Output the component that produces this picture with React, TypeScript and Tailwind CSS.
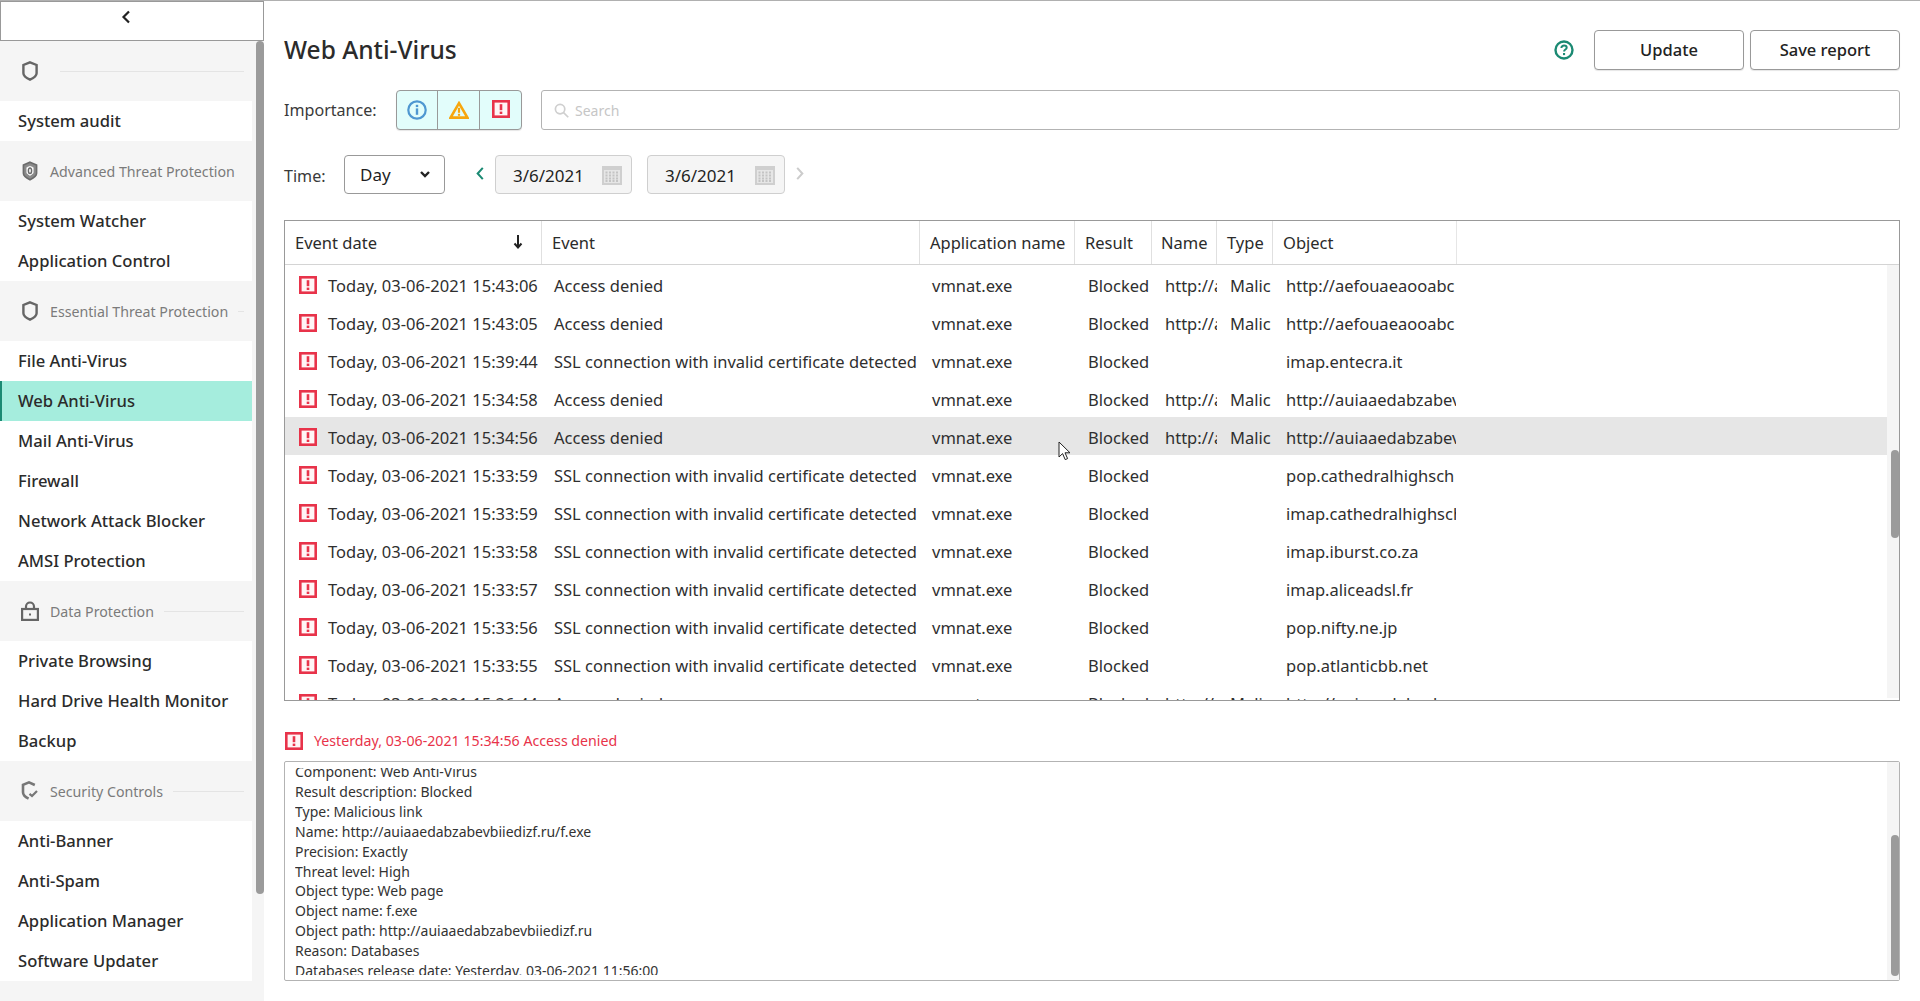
import React from "react";

const Err = ({ className = "" }: { className?: string }) => (
  <svg viewBox="0 0 18 18" className={`w-[18px] h-[18px] shrink-0 ${className}`}>
    <rect x="1.3" y="1.3" width="15.4" height="15.4" fill="#fff5f6" stroke="#e8334a" strokeWidth="2.6" />
    <rect x="7.7" y="4.2" width="2.6" height="6" fill="#e8334a" />
    <rect x="7.7" y="11.6" width="2.6" height="2.4" fill="#e8334a" />
  </svg>
);

const ShieldPlain = () => (
  <svg viewBox="0 0 16 20" className="w-[16px] h-[20px]" fill="none" stroke="#666666" strokeWidth="2.4">
    <path d="M8 1.4 14.6 4v8.2c0 2.6-3.2 4.9-6.6 6.4-3.4-1.5-6.6-3.8-6.6-6.4V4z" />
  </svg>
);
const ShieldAdv = () => (
  <svg viewBox="0 0 16 20" className="w-[16px] h-[20px]" fill="none">
    <path d="M8 1.2 14.6 4v8.2c0 2.6-3.2 4.9-6.6 6.6-3.4-1.7-6.6-4-6.6-6.6V4z" fill="#8a8a8a" stroke="#6b6b6b" strokeWidth="1.6" />
    <path d="M8 5.2 11.2 6.6v4.8c0 1.1-1.4 2-3.2 3-1.8-1-3.2-1.9-3.2-3V6.6z" fill="#ffffff" stroke="#ffffff" strokeWidth=".6" />
    <ellipse cx="8" cy="9.8" rx="1.6" ry="2.8" fill="none" stroke="#6b6b6b" strokeWidth="1.5" />
  </svg>
);
const Lock = () => (
  <svg viewBox="0 0 18 20" className="w-[18px] h-[20px]" fill="none" stroke="#666666" strokeWidth="2.2">
    <path d="M5 8V5.5a4 4 0 0 1 8 0V8" />
    <rect x="1.1" y="8" width="15.8" height="10.9" />
    <rect x="8" y="12.5" width="2" height="2" fill="#666666" stroke="none" />
  </svg>
);
const ShieldCheck = () => (
  <svg viewBox="0 0 18 20" className="w-[18px] h-[20px]" fill="none" stroke="#777777" strokeWidth="2.6">
    <path d="M13.8 4 8 1.4 2 3.9v7.3c0 2.6 2.6 5 5.6 6.5" />
    <path d="M8.5 12.8 11 15l5-5" strokeWidth="2.2" />
  </svg>
);

const Group = ({ icon, label }: { icon: React.ReactNode; label: string }) => (
  <div className="h-[60px] flex items-center pl-[21px] pr-[8px]">
    <span className="w-[18px] flex justify-center shrink-0">{icon}</span>
    {label ? (
      <span className="ml-[11px] pt-px text-[14.2px] text-[#7b7b7b] whitespace-nowrap">{label}</span>
    ) : null}
    <span className={`flex-1 h-px bg-[#e4e4e4] ${label ? "ml-[10px]" : "ml-[21px]"}`} />
  </div>
);

const Item = ({ label, active }: { label: string; active?: boolean }) => (
  <div
    className={`h-[40px] flex items-center pl-[18px] pt-px text-[16.6px] font-medium text-[#2b2b2b] whitespace-nowrap ${
      active ? "bg-[#a5eddd] shadow-[inset_2px_0_0_#1b8a73]" : "bg-white"
    }`}
  >
    {label}
  </div>
);

type Row = { d: string; e: string; n?: string; t?: string; o: string };
const SSL = "SSL connection with invalid certificate detected";
const rows: Row[] = [
  { d: "Today, 03-06-2021 15:43:06", e: "Access denied", n: "http://a", t: "Malicious", o: "http://aefouaeaooabc" },
  { d: "Today, 03-06-2021 15:43:05", e: "Access denied", n: "http://a", t: "Malicious", o: "http://aefouaeaooabc" },
  { d: "Today, 03-06-2021 15:39:44", e: SSL, o: "imap.entecra.it" },
  { d: "Today, 03-06-2021 15:34:58", e: "Access denied", n: "http://a", t: "Malicious", o: "http://auiaaedabzabev" },
  { d: "Today, 03-06-2021 15:34:56", e: "Access denied", n: "http://a", t: "Malicious", o: "http://auiaaedabzabev" },
  { d: "Today, 03-06-2021 15:33:59", e: SSL, o: "pop.cathedralhighsch" },
  { d: "Today, 03-06-2021 15:33:59", e: SSL, o: "imap.cathedralhighsch" },
  { d: "Today, 03-06-2021 15:33:58", e: SSL, o: "imap.iburst.co.za" },
  { d: "Today, 03-06-2021 15:33:57", e: SSL, o: "imap.aliceadsl.fr" },
  { d: "Today, 03-06-2021 15:33:56", e: SSL, o: "pop.nifty.ne.jp" },
  { d: "Today, 03-06-2021 15:33:55", e: SSL, o: "pop.atlanticbb.net" },
  { d: "Today, 03-06-2021 15:26:44", e: "Access denied", n: "http://a", t: "Malicious", o: "http://auiaaedabzabev" },
];

const details = [
  "Component: Web Anti-Virus",
  "Result description: Blocked",
  "Type: Malicious link",
  "Name: http://auiaaedabzabevbiiedizf.ru/f.exe",
  "Precision: Exactly",
  "Threat level: High",
  "Object type: Web page",
  "Object name: f.exe",
  "Object path: http://auiaaedabzabevbiiedizf.ru",
  "Reason: Databases",
  "Databases release date: Yesterday, 03-06-2021 11:56:00",
];

const Head = ({ w, children, last }: { w: string; children?: React.ReactNode; last?: boolean }) => (
  <div className={`${w} shrink-0 pl-[10px] pt-px flex items-center border-r ${last ? "border-[#e6e6e6]" : "border-[#e0e0e0]"} whitespace-nowrap`}>
    {children}
  </div>
);

const Cal = () => (
  <svg viewBox="0 0 20 20" className="w-[20px] h-[20px]">
    <rect x="0" y="1" width="20" height="19" fill="#cfcfcf" />
    <rect x="2" y="5" width="16" height="13" fill="#e6e6e6" />
    {[3.5, 7, 10.5, 14].map((x) =>
      [6.5, 9.5, 12.5, 15].map((y) => <rect key={`${x}-${y}`} x={x} y={y} width="2" height="2" fill="#c4c4c4" />)
    )}
  </svg>
);

const DateBox = ({ w }: { w: string }) => (
  <div className={`${w} h-[39px] rounded-[4px] border border-[#cfcfcf] bg-[#f5f5f5] flex items-center justify-between pl-[17px] pr-[9px] text-[17px] text-[#1f1f1f]`}>
    <span className="pt-[2px]">3/6/2021</span>
    <Cal />
  </div>
);

export default function App() {
  return (
    <div className="w-[1920px] h-[1001px] overflow-hidden bg-white flex flex-col font-['Noto_Sans','Open_Sans',sans-serif] text-[#2b2b2b]">
      <div className="h-px bg-[#b0b0b0] shrink-0" />
      <div className="flex flex-1 min-h-0">
        <aside className="w-[264px] shrink-0 flex flex-col bg-[#f5f5f5]">
          <button className="h-[40px] shrink-0 bg-white border border-[#999999] flex items-start justify-center pt-[8px] pr-[12px]">
            <svg viewBox="0 0 10 14" className="w-[10px] h-[14px]" fill="none" stroke="#222" strokeWidth="2.2">
              <path d="M8 1.5 2.5 7 8 12.5" />
            </svg>
          </button>
          <div className="flex flex-1 min-h-0">
            <div className="w-[252px] shrink-0">
              <Group icon={<ShieldPlain />} label="" />
              <Item label="System audit" />
              <Group icon={<ShieldAdv />} label="Advanced Threat Protection" />
              <Item label="System Watcher" />
              <Item label="Application Control" />
              <Group icon={<ShieldPlain />} label="Essential Threat Protection" />
              <Item label="File Anti-Virus" />
              <Item label="Web Anti-Virus" active />
              <Item label="Mail Anti-Virus" />
              <Item label="Firewall" />
              <Item label="Network Attack Blocker" />
              <Item label="AMSI Protection" />
              <Group icon={<Lock />} label="Data Protection" />
              <Item label="Private Browsing" />
              <Item label="Hard Drive Health Monitor" />
              <Item label="Backup" />
              <Group icon={<ShieldCheck />} label="Security Controls" />
              <Item label="Anti-Banner" />
              <Item label="Anti-Spam" />
              <Item label="Application Manager" />
              <Item label="Software Updater" />
            </div>
            <div className="ml-[4px] w-[8px] h-[853px] rounded-[4px] bg-[#9b9b9b]" />
          </div>
        </aside>

        <main className="relative flex-1 min-w-0 pl-[20px] pr-[20px] flex flex-col">
          <div className="h-[29px] shrink-0" />
          <div className="h-[40px] shrink-0 flex items-center">
            <h1 className="text-[24.5px] font-medium text-[#2b2b2b] leading-none">Web Anti-Virus</h1>
            <svg viewBox="0 0 20 20" className="w-[20px] h-[20px] ml-auto" fill="none">
              <circle cx="10" cy="10" r="8.5" stroke="#1b8a73" strokeWidth="2.4" />
              <path d="M7.4 7.9c0-1.5 1.1-2.4 2.7-2.4 1.5 0 2.6.9 2.6 2.2 0 1.8-2.6 1.9-2.6 3.7" stroke="#1b8a73" strokeWidth="2" />
              <rect x="9" y="13" width="2.1" height="2.1" fill="#1b8a73" />
            </svg>
            <button className="ml-[20px] w-[150px] h-[40px] rounded-[4px] border border-[#999999] bg-white text-[16.5px] font-medium text-[#222222] shadow-[0_1px_1px_rgba(0,0,0,0.1)]">Update</button>
            <button className="ml-[6px] w-[150px] h-[40px] rounded-[4px] border border-[#999999] bg-white text-[16.5px] font-medium text-[#222222] shadow-[0_1px_1px_rgba(0,0,0,0.1)]">Save report</button>
          </div>

          <div className="h-[40px] mt-[20px] shrink-0 flex items-center">
            <span className="w-[112px] pt-px text-[16.1px] text-[#3a3a3a]">Importance:</span>
            <div className="w-[126px] h-[40px] rounded-[4px] border border-[#999999] bg-[#e2fdfb] flex shadow-[0_1px_1px_rgba(0,0,0,0.1)]">
              <div className="w-[41px] flex items-center justify-center border-r border-[#999999]">
                <svg viewBox="0 0 20 20" className="w-[20px] h-[20px]" fill="none">
                  <circle cx="10" cy="10" r="8.7" stroke="#4f97d1" strokeWidth="2.2" />
                  <rect x="8.8" y="8.4" width="2.4" height="6.4" fill="#4f97d1" />
                  <rect x="8.8" y="4.8" width="2.4" height="2.3" fill="#4f97d1" />
                </svg>
              </div>
              <div className="w-[42px] flex items-center justify-center border-r border-[#999999]">
                <svg viewBox="0 0 20 18" className="w-[20px] h-[18px]" fill="none">
                  <path d="M10 2.2 18.4 16.6H1.6z" stroke="#f7a60e" strokeWidth="2.6" />
                  <rect x="8.9" y="6.8" width="2.2" height="5" fill="#f7a60e" />
                  <rect x="8.9" y="12.8" width="2.2" height="2" fill="#f7a60e" />
                </svg>
              </div>
              <div className="flex-1 flex items-center justify-center">
                <Err className="-mt-[3px]" />
              </div>
            </div>
            <div className="ml-[19px] flex-1 h-[40px] rounded-[3px] border border-[#b3b3b3] bg-white flex items-center pl-[12px]">
              <svg viewBox="0 0 16 16" className="w-[15px] h-[15px]" fill="none" stroke="#cfcfcf" strokeWidth="1.8">
                <circle cx="6.5" cy="6.5" r="5" />
                <path d="m10.2 10.2 5 5" />
              </svg>
              <span className="ml-[6px] text-[14px] text-[#c6c6c6]">Search</span>
            </div>
          </div>

          <div className="h-[39px] mt-[25px] shrink-0 flex items-center">
            <span className="w-[60px] text-[16.1px] text-[#3a3a3a] pt-[4px]">Time:</span>
            <div className="w-[101px] h-[39px] rounded-[4px] border border-[#999999] bg-white flex items-center justify-between pl-[15px] pr-[14px] text-[17px] text-[#1f1f1f]">
              <span>Day</span>
              <svg viewBox="0 0 10 7" className="w-[10px] h-[7px]" fill="none" stroke="#222" strokeWidth="2.4">
                <path d="m1 1 4 4 4-4" />
              </svg>
            </div>
            <svg viewBox="0 0 8 14" className="ml-[31px] w-[8px] h-[13px] -mt-[2px]" fill="none" stroke="#1b8a73" strokeWidth="2.2">
              <path d="M7 1 1.5 7 7 13" />
            </svg>
            <div className="ml-[11px]"><DateBox w="w-[137px]" /></div>
            <div className="ml-[15px]"><DateBox w="w-[138px]" /></div>
            <svg viewBox="0 0 8 14" className="ml-[11px] w-[8px] h-[13px] -mt-[2px]" fill="none" stroke="#cccccc" strokeWidth="2.2">
              <path d="M1 1 6.5 7 1 13" />
            </svg>
          </div>

          <div className="mt-[26px] h-[481px] shrink-0 border border-[#999999] flex flex-col text-[16.5px]">
            <div className="h-[44px] shrink-0 flex border-b border-[#d4d4d4] text-[#2b2b2b]">
              <Head w="w-[257px]">
                <span className="flex-1">Event date</span>
                <svg viewBox="0 0 10 14" className="w-[10px] h-[14px] mr-[18px] -mt-[2px]" fill="none" stroke="#222" strokeWidth="2">
                  <path d="M5 0v12M1.5 8.5 5 12.5l3.5-4" />
                </svg>
              </Head>
              <Head w="w-[378px]">Event</Head>
              <Head w="w-[155px]">Application name</Head>
              <Head w="w-[77px]">Result</Head>
              <Head w="w-[65px]"><span className="-ml-px">Name</span></Head>
              <Head w="w-[56px]">Type</Head>
              <Head w="w-[184px]" last>Object</Head>
            </div>
            <div className="flex-1 min-h-0 flex">
              <div className="flex-1 min-w-0 overflow-hidden">
                {rows.map((r, i) => (
                  <div key={i} className={`h-[38px] pt-[4px] flex items-center whitespace-nowrap text-[#2f2f2f] ${i === 4 ? "bg-[#e6e6e6]" : ""}`}>
                    <div className="w-[257px] shrink-0 pl-[14px] flex items-center">
                      <Err className="-mt-[3px]" />
                      <span className="ml-[11px]">{r.d}</span>
                    </div>
                    <div className="w-[378px] shrink-0 pl-[12px] overflow-hidden">{r.e}</div>
                    <div className="w-[155px] shrink-0 pl-[12px]">vmnat.exe</div>
                    <div className="w-[77px] shrink-0 pl-[13px]">Blocked</div>
                    <div className="w-[65px] shrink-0 pl-[13px]"><div className="overflow-hidden">{r.n}</div></div>
                    <div className="w-[56px] shrink-0 pl-[13px] pr-[2px]"><div className="overflow-hidden">{r.t}</div></div>
                    <div className="w-[184px] shrink-0 pl-[13px] pr-px"><div className="overflow-hidden">{r.o}</div></div>
                  </div>
                ))}
              </div>
              <div className="w-[12px] shrink-0 bg-[#f5f5f5] pl-[4px] pt-[185px] mb-[2px]">
                <div className="h-[88px] rounded-[4px] bg-[#9b9b9b]" />
              </div>
            </div>
          </div>

          <div className="mt-[30px] h-[20px] shrink-0 flex items-center text-[14.2px] text-[#e8334a]">
            <Err className="ml-px" />
            <span className="ml-[11px]">Yesterday, 03-06-2021 15:34:56 Access denied</span>
          </div>

          <div className="mt-[10px] h-[220px] shrink-0 rounded-[2px] border border-[#b3b3b3] flex">
            <div className="flex-1 min-w-0 pt-[6px] pl-[10px]">
              <div className="h-[207px] overflow-hidden text-[14px] leading-[19.9px] text-[#333333]">
                <div className="-mt-[6px]">
                  {details.map((l) => (
                    <div key={l} className="whitespace-nowrap">{l}</div>
                  ))}
                </div>
              </div>
            </div>
            <div className="w-[12px] shrink-0 bg-[#f5f5f5] pl-[4px] pt-[73px]">
              <div className="h-[141px] rounded-[4px] bg-[#9b9b9b]" />
            </div>
          </div>

          <svg viewBox="0 0 13 20" className="absolute left-[794px] top-[440px] w-[13px] h-[20px]">
            <path d="M1 1v15l3.6-3.4 2.6 6 2.4-1-2.6-5.8H12z" fill="#ffffff" stroke="#222" strokeWidth="1" />
          </svg>
        </main>
      </div>
    </div>
  );
}
